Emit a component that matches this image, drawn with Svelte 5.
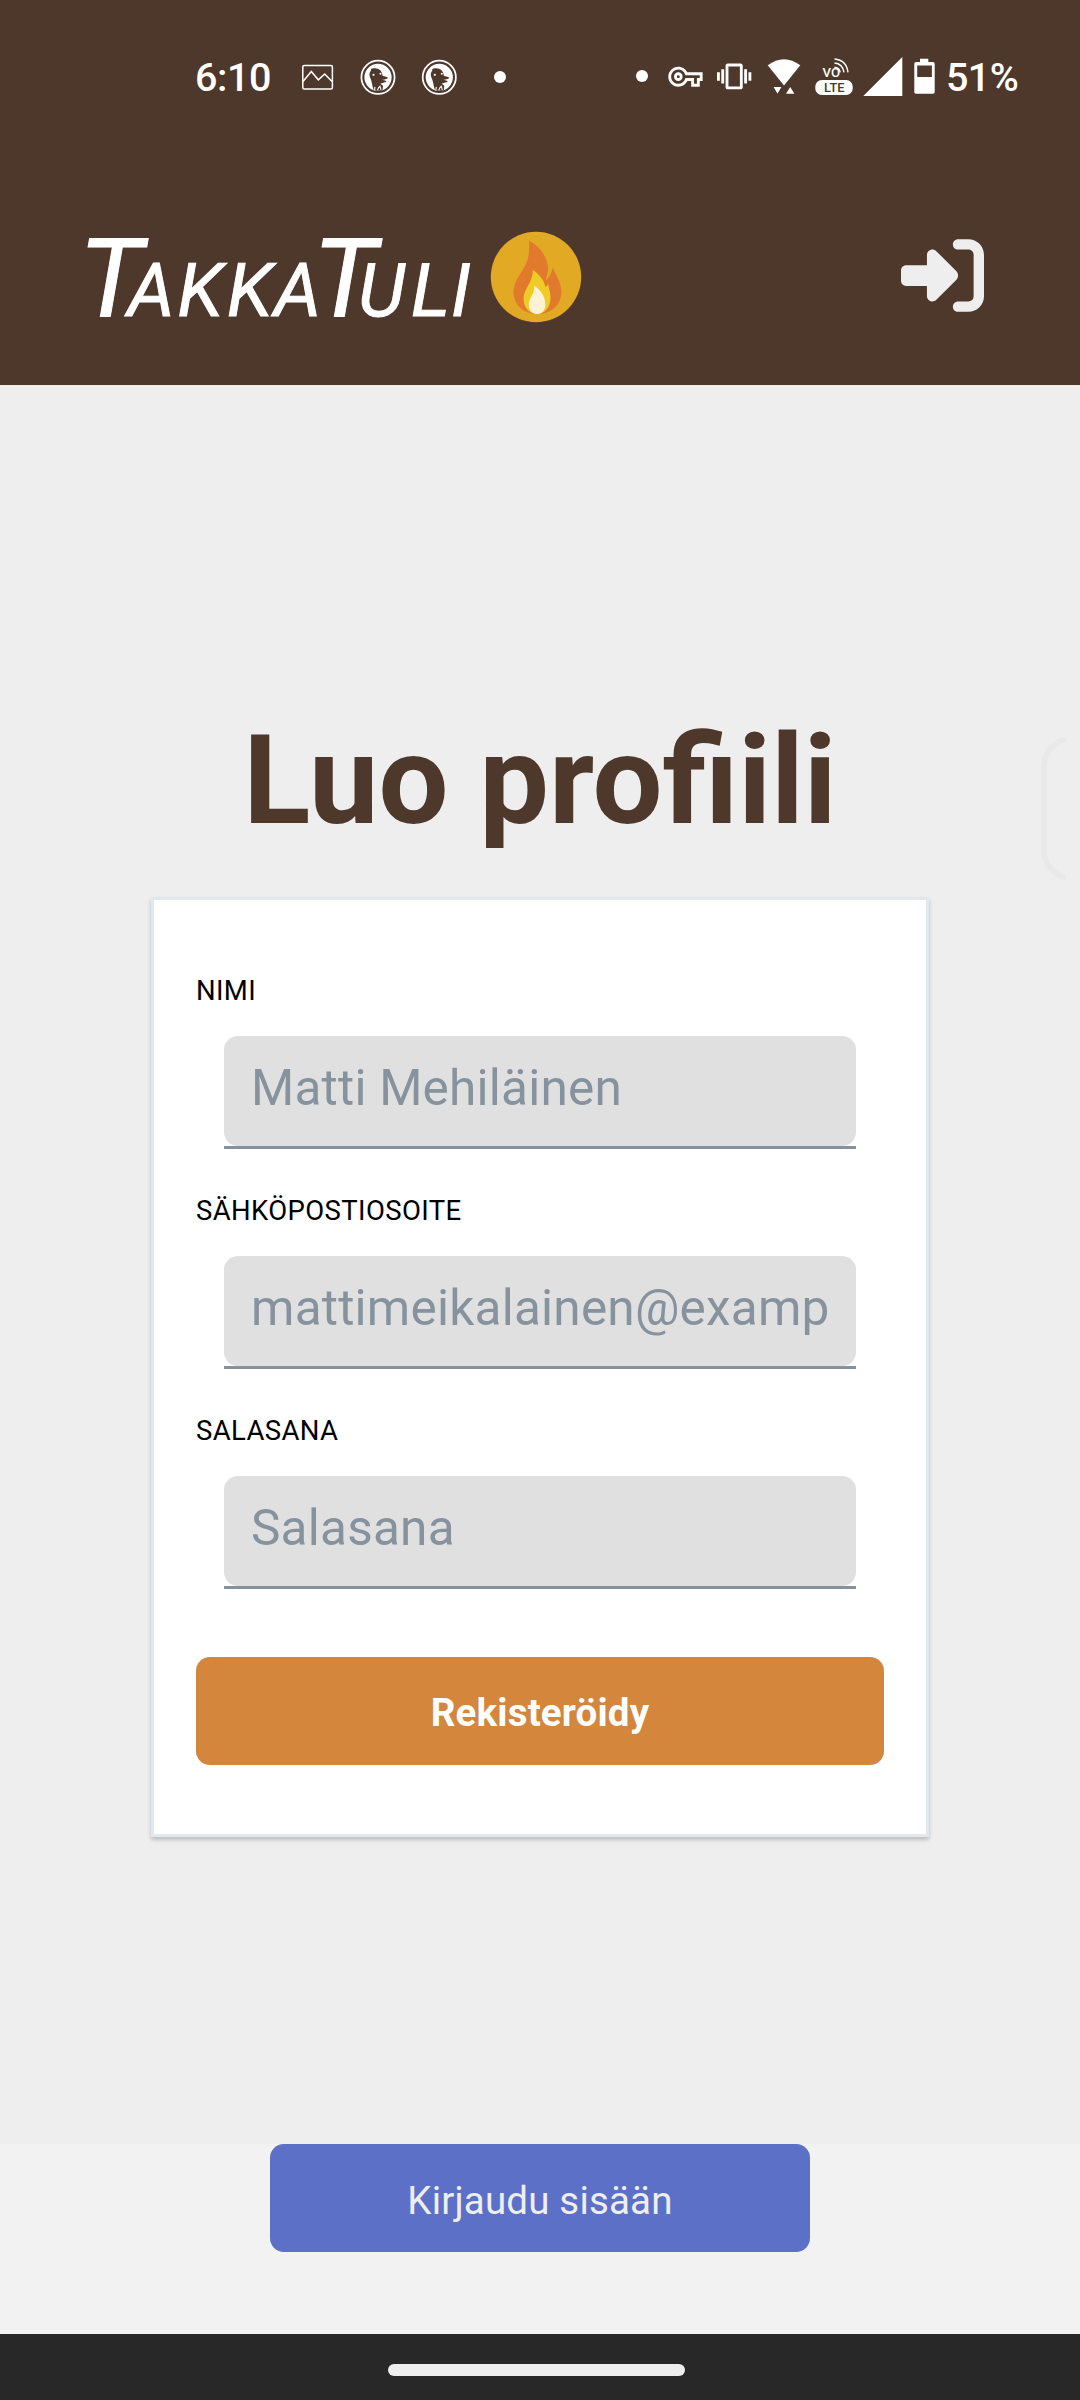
<script>
  const fields = [
    { id: 'name', label: 'NIMI', placeholder: 'Matti Mehiläinen', type: 'text' },
    { id: 'email', label: 'SÄHKÖPOSTIOSOITE', placeholder: 'mattimeikalainen@example.com', type: 'text' },
    { id: 'password', label: 'SALASANA', placeholder: 'Salasana', type: 'password' }
  ];
  const badges = [378, 439.3];
</script>

<div class="screen">
  <header>
    <div class="status">
      <span class="time">6:10</span>
      <svg class="notifications" width="210" height="50" viewBox="300 52 210 50">
        <g fill="none" stroke="#fff" stroke-width="1.5">
          <rect x="302.8" y="65.5" width="29.6" height="23.5" rx="1.5" />
          <path d="M303 81.5L311.3 71.5L318.3 79.8L324.7 74L332 81.5" />
        </g>
        {#each badges as cx}
          <g transform="translate({cx} 77.3)">
            <circle r="16.6" fill="none" stroke="#fff" stroke-width="1.7" />
            <circle r="13.6" fill="#fff" />
            <path d="M-7 -6.5C-8 -9 -5 -9.500 -3 -9C1 -9 4.500 -6 4.500 -1.500L9.500 0C10.500 1.500 7 2.300 4 2.500L8.500 3.800C8 5.500 5 5.500 2.500 6.500L5 8.500L4.500 13C0 14 -3 13.500 -4.500 12.500C-6 8 -6 4 -8 0C-9 -3 -8.500 -5 -7 -6.500Z" fill="#4e382b" />
            <circle cx="-4.500" cy="-2.500" r="1.100" fill="#fff" />
            <circle cx="2.500" cy="-3.500" r="1" fill="#fff" />
            <path d="M-3.500 13L-3 9.500M-0.500 13L0.500 10.500L2 9L3 12.500" fill="none" stroke="#fff" stroke-width="1.100" />
          </g>
        {/each}
        <circle cx="500" cy="77" r="6" fill="#fff" />
      </svg>
      <svg class="system" width="304" height="50" viewBox="634 52 304 50" fill="#fff">
        <circle cx="642" cy="76" r="6" />
        <path transform="translate(668.3 59.500) scale(1.43)" d="M22 19h-6v-4h-2.680c-1.140 2.420-3.600 4-6.320 4-3.860 0-7-3.140-7-7s3.140-7 7-7c2.720 0 5.170 1.580 6.320 4H24v6h-2v4zm-4-2h2v-4h2v-2H11.940l-.230-.670C11.010 8.340 9.110 7 7 7c-2.760 0-5 2.240-5 5s2.240 5 5 5c2.110 0 4.010-1.340 4.710-3.330l.230-.670H18v4zM7 15c-1.650 0-3-1.350-3-3s1.350-3 3-3 3 1.350 3 3-1.350 3-3 3zm0-4c-.550 0-1 .450-1 1s.450 1 1 1 1-.450 1-1-.450-1-1-1z" />
        <path transform="translate(717 59.300) scale(1.43)" d="M0 15h2V9H0v6zm3 2h2V7H3v10zm19-8v6h2V9h-2zm-3 8h2V7h-2v10zM16.500 3h-9C6.670 3 6 3.670 6 4.500v15c0 .830.670 1.500 1.500 1.500h9c.830 0 1.500-.670 1.500-1.500v-15c0-.830-.670-1.500-1.500-1.500zM16 19H8V5h8v14z" />
        <path d="M767.7 65.300Q784 53 800.300 65.300L784 85.500Z" />
        <path d="M773.600 87H781.400L777.500 93.700ZM786 93.700H794.400L790.200 87Z" />
        <g fill="none" stroke="#fff" stroke-width="1.400">
          <path d="M834.500 67.200Q839.300 67.500 840.200 72.300" />
          <path d="M834.500 63Q842.500 63.500 844 72.300" />
          <path d="M834.500 59Q846.500 60 848 72.300" />
        </g>
        <text x="822.500" y="76.800" font-size="13.500" textLength="17.500" lengthAdjust="spacingAndGlyphs">VO</text>
        <rect x="815.300" y="80" width="37.400" height="15" rx="6.500" />
        <text x="824" y="92" font-size="12.500" font-weight="500" fill="#4e382b" textLength="20.500" lengthAdjust="spacingAndGlyphs">LTE</text>
        <path d="M863.300 96L902.300 57V96Z" />
        <path fill-rule="evenodd" d="M920 58.700H928.300V62H933Q934.700 62 934.700 63.700V92Q934.700 93.700 933 93.700H916Q914.300 93.700 914.300 92V63.700Q914.300 62 916 62H920ZM917.200 65.500V77H931.900V65.500Z" />
      </svg>
      <span class="percent">51%</span>
    </div>

    <div class="appbar">
      <svg class="logo" width="500" height="140" viewBox="84 205 500 140" role="img" aria-label="TakkaTuli">
        <g class="wordmark" fill="#fff" stroke="#fff" stroke-width="0.900">
          <text y="315.500"><tspan class="big" x="79">T</tspan><tspan x="127.500 177.500 227 274">AKKA</tspan><tspan class="big" x="313">T</tspan><tspan x="358 411 451">ULI</tspan></text>
        </g>
        <circle cx="536" cy="277" r="45.200" fill="#e2a925" />
        <path d="M529 240.700C538 245 548 256 548 269C548 274 546 277 545.900 280.500C549.500 277 552 273 552.800 267.300C555 275 561.400 281 561.400 292C561.400 304 552 314 537.300 314C523 314 513.500 304 513.500 292C513.500 282 520 275 525 266C529.500 257 529.500 249 529 240.700Z" fill="#e17a2c" />
        <path d="M532.800 270C539 274 544 280 545.500 287C547 286 547.800 285 548.300 283.500C548.500 289 550.500 291 550.500 297.500C550.500 307 545 314 537.300 314C529 314 523.500 307 523.500 298.500C523.500 289 533 283 532.800 270Z" fill="#efcb27" />
        <path d="M534.200 285.700C540 289 545.300 296 545.300 304.500C545.300 310 542 314 537 314C532 314 528.700 310 528.700 304.500C528.700 298 535 294 534.200 285.700Z" fill="#fdf2d4" />
      </svg>
      <svg class="login" width="83" height="83" viewBox="0 0 512 512" fill="#eee">
        <path d="M217.900 105.900L340.700 228.700c7.200 7.200 11.300 17.100 11.300 27.300s-4.100 20.100-11.300 27.300L217.900 406.100c-6.400 6.400-15 9.900-24 9.900c-18.700 0-33.900-15.200-33.900-33.900l0-62.100L32 320c-17.700 0-32-14.300-32-32l0-64c0-17.700 14.300-32 32-32l128 0 0-62.100c0-18.700 15.200-33.900 33.900-33.900c9 0 17.600 3.600 24 9.900zM352 416l64 0c17.700 0 32-14.300 32-32l0-256c0-17.700-14.300-32-32-32l-64 0c-17.700 0-32-14.300-32-32s14.300-32 32-32l64 0c53 0 96 43 96 96l0 256c0 53-43 96-96 96l-64 0c-17.700 0-32-14.300-32-32s14.300-32 32-32z" />
      </svg>
    </div>
  </header>

  <main>
    <h1>Luo profiili</h1>
    <form class="card">
      {#each fields as field}
        <div class="field">
          <label for={field.id}>{field.label}</label>
          <div class="underline">
            <input id={field.id} type={field.type} placeholder={field.placeholder} />
          </div>
        </div>
      {/each}
      <button class="primary" type="button">Rekisteröidy</button>
    </form>
    <svg class="edge-handle" width="30" height="150" viewBox="1038 733 30 150" fill="none" stroke="#e9e9e9" stroke-width="5.500" stroke-linecap="round">
      <path d="M1063.500 739.500C1052 745 1044 753 1044 766V851C1044 864 1052 872 1063.500 877.500" />
    </svg>
  </main>

  <footer>
    <button class="secondary" type="button">Kirjaudu sisään</button>
  </footer>
  <nav><span class="pill"></span></nav>
</div>

<style>
  :global(body) {
    margin: 0;
  }
  .screen {
    width: 1080px;
    height: 2400px;
    display: flex;
    flex-direction: column;
    background: #eee;
    font-family: Roboto, "Liberation Sans", sans-serif;
    overflow: hidden;
  }
  svg {
    display: block;
    flex: none;
    overflow: visible;
  }
  header {
    box-sizing: border-box;
    height: 385px;
    background: #4e382b;
    flex: none;
  }
  .status {
    display: flex;
    align-items: flex-start;
    box-sizing: border-box;
    height: 166px;
    padding: 52px 0 0 195px;
    color: #fff;
    font-size: 39.5px;
    font-weight: 500;
    line-height: 52px;
  }
  .time {
    width: 105px;
    letter-spacing: -0.4px;
  }
  .system {
    margin-left: 124px;
  }
  .percent {
    margin-left: 8px;
    letter-spacing: -0.6px;
  }
  .appbar {
    display: flex;
    justify-content: space-between;
    align-items: center;
    height: 218px;
    padding: 0 96px 0 84px;
  }
  .wordmark {
    font-style: italic;
    font-size: 74.5px;
  }
  .big {
    font-size: 110px;
  }
  main {
    position: relative;
    box-sizing: border-box;
    height: 1759px;
    padding-top: 323px;
    display: flex;
    flex-direction: column;
    align-items: center;
    flex: none;
  }
  .edge-handle {
    position: absolute;
    left: 1038px;
    top: 348px;
  }
  h1 {
    margin: 0 0 43px;
    color: #4e382b;
    font-size: 124px;
    font-weight: 700;
    line-height: 146px;
  }
  .card {
    box-sizing: border-box;
    width: 778px;
    height: 940px;
    padding: 74px 42px 0;
    background: #fff;
    border: 3px solid #e1e8ee;
    box-shadow: 0 3px 4px rgba(0, 0, 0, 0.2);
  }
  .field {
    height: 220px;
  }
  label {
    display: block;
    height: 62px;
    line-height: 33px;
    font-size: 27.5px;
    letter-spacing: 0.38px;
    color: #000;
  }
  .underline {
    width: 632px;
    height: 110px;
    margin-left: 28px;
    border-bottom: 3px solid #86939e;
  }
  input {
    display: block;
    box-sizing: border-box;
    width: 100%;
    height: 110px;
    margin: 0;
    padding: 0 28px 7px 27px;
    border: 0;
    border-radius: 14px;
    outline: 0;
    background: #e0e0e0;
    font: 49.5px Roboto, "Liberation Sans", sans-serif;
    letter-spacing: 0.22px;
  }
  input::placeholder {
    color: #86939e;
    opacity: 1;
  }
  button {
    display: block;
    height: 108px;
    border: 0;
    border-radius: 14px;
    font-family: inherit;
    font-size: 38.5px;
    letter-spacing: 0.18px;
  }
  .primary {
    width: 688px;
    margin: 23px 0 0;
    padding: 2px 0 0;
    background: #d3863c;
    color: #fff;
    font-weight: 700;
  }
  footer {
    display: flex;
    justify-content: center;
    height: 190px;
    background: #f2f2f2;
    flex: none;
  }
  .secondary {
    width: 540px;
    padding: 5px 0 0;
    background: #5d70c7;
    color: #eee;
  }
  nav {
    display: flex;
    box-sizing: border-box;
    height: 66px;
    padding: 30px 0 0 388px;
    background: #282828;
    flex: none;
  }
  .pill {
    width: 297px;
    height: 12px;
    border-radius: 6px;
    background: #eee;
  }
</style>
